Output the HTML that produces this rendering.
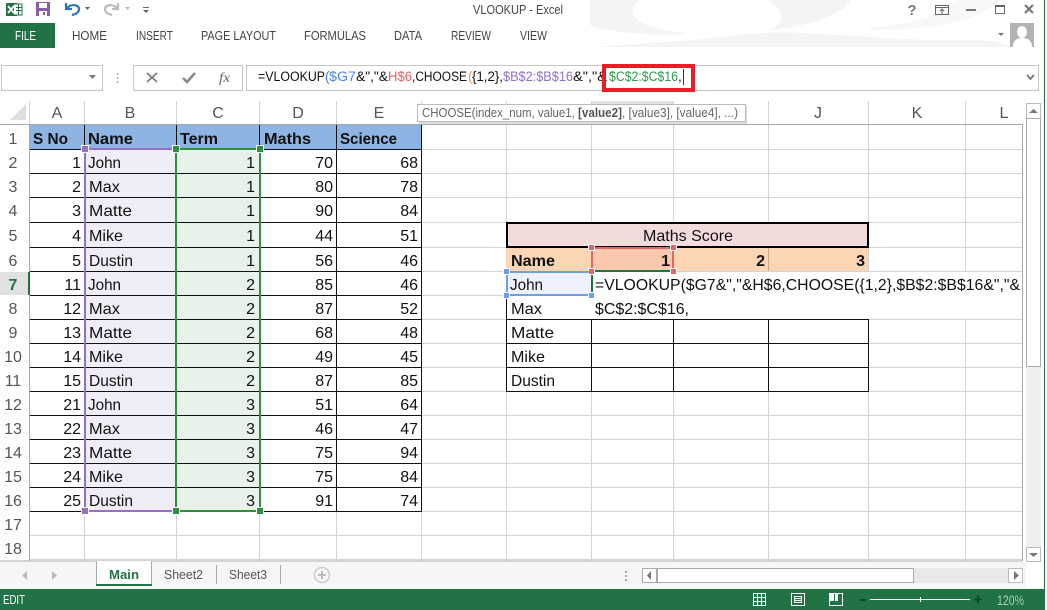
<!DOCTYPE html>
<html><head><meta charset="utf-8"><title>VLOOKUP - Excel</title>
<style>
html,body{margin:0;padding:0;background:#fff;overflow:hidden;width:1047px;height:610px}
svg{display:block;position:absolute;left:0;top:0}
text{font-family:"Liberation Sans",sans-serif;white-space:pre}
.c{font-size:16px;fill:#111}
.b{font-size:16px;font-weight:bold;fill:#111}
.r{font-size:16px;fill:#111;text-anchor:end}
.rb{font-size:16px;font-weight:bold;fill:#111;text-anchor:end}
.h{font-size:16px;fill:#555;text-anchor:middle}
.t{font-size:12.5px;fill:#444}
.f{font-size:13.5px;fill:#111}
.tip{font-size:12.5px;fill:#666}
</style></head><body>
<svg width="1047" height="610" viewBox="0 0 1047 610" xmlns="http://www.w3.org/2000/svg">
<rect width="1047" height="610" fill="#fff"/>
<!-- watermark -->
<g fill="#f4f4f4">
<path d="M590 47C640 44 700 40 740 35C790 28 850 38 930 40C960 41 990 36 1010 47Z"/>
<path d="M590 0H640C620 15 640 30 690 33C650 38 600 30 590 25Z"/>
<path d="M768 0H850C845 15 800 28 770 30C790 20 780 8 768 0Z"/>
<path d="M870 28C900 24 930 22 960 0H1000C990 14 950 30 870 30Z" opacity=".7"/>
</g>
<!-- QAT -->
<rect x="6" y="3" width="11" height="13" fill="#217346"/>
<path d="M14 4H22V15H14" fill="#fff" stroke="#217346"/>
<path d="M16 7.500H22M16 10.500H22M18.500 4V15" stroke="#217346" fill="none"/>
<path d="M8 6L14 13M14 6L8 13" stroke="#fff" stroke-width="1.800"/>
<path d="M36 2H50V16H36Z" fill="#8a5fa8"/><rect x="39" y="3" width="8" height="5" fill="#fff"/><rect x="39" y="11" width="8" height="5" fill="#fff"/><rect x="43" y="12" width="2" height="3" fill="#8a5fa8"/>
<path d="M66 3V9H72" fill="none" stroke="#2e75b6" stroke-width="2.200"/><path d="M67 8C72 3 80 5 79 10C78 13 76 14 72 15" fill="none" stroke="#2e75b6" stroke-width="2.200"/>
<path d="M85 7H90L87.500 10Z" fill="#666"/>
<path d="M118 3V9H112" fill="none" stroke="#bbb" stroke-width="2.200"/><path d="M117 8C112 3 104 5 105 10C106 13 108 14 112 15" fill="none" stroke="#bbb" stroke-width="2.200"/>
<path d="M125 7H130L127.500 10Z" fill="#bbb"/>
<path d="M143 7.500H149" stroke="#666"/><path d="M143 10H149L146 13Z" fill="#666"/>
<!-- title -->
<text x="473" y="14" class="t" textLength="90" lengthAdjust="spacingAndGlyphs">VLOOKUP - Excel</text>
<text x="912" y="15" style="font-size:15px;font-weight:bold;fill:#777" text-anchor="middle">?</text>
<rect x="935.500" y="5.500" width="13" height="9" fill="none" stroke="#666"/><path d="M936 7.500H948" stroke="#666"/><path d="M942 14V9.500M940 11L942 9L944 11" stroke="#666" fill="none"/>
<rect x="966" y="9" width="10" height="2" fill="#777"/>
<rect x="995.500" y="5.500" width="9" height="8" fill="none" stroke="#666"/><rect x="995" y="5" width="10" height="2" fill="#666"/>
<path d="M1025 5L1033 13M1033 5L1025 13" stroke="#777" stroke-width="2.200"/>
<!-- ribbon tabs -->
<rect x="0" y="23" width="55" height="25" fill="#217346"/>
<text x="15" y="40" style="font-size:12.5px;fill:#fff" textLength="21" lengthAdjust="spacingAndGlyphs">FILE</text>
<text x="72" y="40" class="t" textLength="35" lengthAdjust="spacingAndGlyphs">HOME</text>
<text x="136" y="40" class="t" textLength="37" lengthAdjust="spacingAndGlyphs">INSERT</text>
<text x="201" y="40" class="t" textLength="75" lengthAdjust="spacingAndGlyphs">PAGE LAYOUT</text>
<text x="304" y="40" class="t" textLength="62" lengthAdjust="spacingAndGlyphs">FORMULAS</text>
<text x="394" y="40" class="t" textLength="28" lengthAdjust="spacingAndGlyphs">DATA</text>
<text x="451" y="40" class="t" textLength="40" lengthAdjust="spacingAndGlyphs">REVIEW</text>
<text x="520" y="40" class="t" textLength="27" lengthAdjust="spacingAndGlyphs">VIEW</text>
<path d="M998 33H1004L1001 36Z" fill="#777"/>
<rect x="1010" y="23" width="24" height="24" fill="#b2b2b2"/>
<ellipse cx="1022" cy="32" rx="5" ry="6" fill="#fff"/><path d="M1013 47C1013 40 1017 38 1022 38C1027 38 1032 40 1032 47Z" fill="#fff"/>
<rect x="1044" y="0" width="1" height="589" fill="#217346"/>
<!-- formula bar -->
<rect x="1.500" y="65.500" width="101" height="25" fill="#fff" stroke="#c6c6c6"/>
<path d="M89 75H96L92.500 79Z" fill="#777"/>
<path d="M117.500 73V75M117.500 77V79M117.500 81V83" stroke="#aaa" stroke-width="1.500"/>
<rect x="133.500" y="65.500" width="109" height="25" fill="#fff" stroke="#c6c6c6"/>
<path d="M147 73L157 82M157 73L147 82" stroke="#888" stroke-width="2"/>
<path d="M183 78L187 82L195 73" stroke="#888" stroke-width="2.500" fill="none"/>
<text x="219" y="82" style="font-family:'Liberation Serif',serif;font-style:italic;font-size:14px;fill:#666" textLength="11" lengthAdjust="spacingAndGlyphs">fx</text>
<rect x="246.500" y="65.500" width="792" height="25" fill="#fff" stroke="#c6c6c6"/>
<path d="M1027 75L1030.500 79L1034 75" stroke="#777" stroke-width="1.800" fill="none"/>
<text x="258" y="81" class="f" textLength="67" lengthAdjust="spacingAndGlyphs">=VLOOKUP</text>
<text x="325" y="81" class="f" style="fill:#3f7fd9">(</text>
<text x="329" y="81" class="f" style="fill:#4a86e8" textLength="27" lengthAdjust="spacingAndGlyphs">$G7</text>
<text x="356" y="81" class="f" textLength="32" lengthAdjust="spacingAndGlyphs">&amp;","&amp;</text>
<text x="388" y="81" class="f" style="fill:#e85f5f" textLength="24" lengthAdjust="spacingAndGlyphs">H$6</text>
<text x="412" y="81" class="f" textLength="55" lengthAdjust="spacingAndGlyphs">,CHOOSE</text>
<text x="468" y="81" class="f" style="fill:#e89050">(</text>
<text x="472" y="81" class="f" textLength="31" lengthAdjust="spacingAndGlyphs">{1,2},</text>
<text x="503" y="81" class="f" style="fill:#9370c8" textLength="70" lengthAdjust="spacingAndGlyphs">$B$2:$B$16</text>
<text x="573" y="81" class="f" textLength="34" lengthAdjust="spacingAndGlyphs">&amp;","&amp;</text>
<text x="609" y="81" class="f" style="fill:#2d9a48" textLength="69" lengthAdjust="spacingAndGlyphs">$C$2:$C$16</text>
<text x="678" y="81" class="f">,</text>
<rect x="683" y="69" width="1" height="16" fill="#333"/>
<rect x="604" y="66" width="89" height="24" fill="none" stroke="#ed1c24" stroke-width="4"/>
<!-- corner -->
<path d="M10 120L26 104V120Z" fill="#dedede"/>
<!-- selected headers -->
<rect x="591" y="101" width="82" height="23" fill="#e1e1e1"/>
<rect x="591" y="122" width="82" height="2" fill="#217346"/>
<rect x="0" y="272" width="29" height="23" fill="#e1e1e1"/>
<!-- column header separators -->
<path d="M29.500 101V124M84.500 101V124M176.500 101V124M259.500 101V124M336.500 101V124M421.500 101V124M506.500 101V124M591.500 101V124M673.500 101V124M768.500 101V124M868.500 101V124M965.500 101V124" stroke="#d4d4d4"/>
<text x="57" y="118" class="h">A</text><text x="130" y="118" class="h">B</text><text x="218" y="118" class="h">C</text><text x="298" y="118" class="h">D</text><text x="379" y="118" class="h">E</text><text x="818" y="118" class="h">J</text><text x="917" y="118" class="h">K</text><text x="1004" y="118" class="h">L</text>
<!-- fills -->
<rect x="30" y="125" width="392" height="24" fill="#8db4e2"/>
<rect x="85" y="149" width="91" height="362" fill="#f0edf8"/>
<rect x="177" y="149" width="82" height="362" fill="#e9f2e8"/>
<!-- grid -->
<path d="M422 149.500H1022M422 173.500H1022M422 197.500H1022M422 222.500H1022M422 247.500H1022M422 271.500H1022M422 295.500H1022M422 319.500H1022M422 343.500H1022M422 367.500H1022M422 391.500H1022M422 415.500H1022M422 439.500H1022M422 463.500H1022M422 487.500H1022M30 511.500H1022M30 535.500H1022M30 559.500H1022" stroke="#d4d4d4"/>
<path d="M84.500 511V561M176.500 511V561M259.500 511V561M336.500 511V561M421.500 511V561M506.500 125V561M591.500 125V561M673.500 125V561M768.500 125V561M868.500 125V561M965.500 125V561" stroke="#d4d4d4"/>
<!-- black table -->
<path d="M30 149.500H422M30 173.500H422M30 197.500H422M30 222.500H422M30 247.500H422M30 271.500H422M30 295.500H422M30 319.500H422M30 343.500H422M30 367.500H422M30 391.500H422M30 415.500H422M30 439.500H422M30 463.500H422M30 487.500H422M30 511.500H422" stroke="#111"/>
<path d="M84.500 125V511M176.500 125V511M259.500 125V511M336.500 125V511M421.500 125V511" stroke="#111"/>
<!-- sheet frame -->
<path d="M0 124.500H1022.500V561" stroke="#aaa" fill="none"/>
<path d="M29.500 124V561M0 561H1022" stroke="#aaa" stroke-width="1" fill="none"/>
<rect x="28" y="272" width="2" height="23" fill="#217346"/>
<!-- row labels -->
<g>
<text x="13" y="144" class="h">1</text><text x="13" y="168" class="h">2</text><text x="13" y="192" class="h">3</text><text x="13" y="216" class="h">4</text><text x="13" y="241" class="h">5</text><text x="13" y="266" class="h">6</text>
<text x="13" y="290" class="h" style="font-weight:bold;fill:#217346">7</text>
<text x="13" y="314" class="h">8</text><text x="13" y="338" class="h">9</text><text x="13" y="362" class="h">10</text><text x="13" y="386" class="h">11</text><text x="13" y="410" class="h">12</text><text x="13" y="434" class="h">13</text><text x="13" y="458" class="h">14</text><text x="13" y="482" class="h">15</text><text x="13" y="506" class="h">16</text><text x="13" y="530" class="h">17</text><text x="13" y="554" class="h">18</text>
</g>
<!-- table header -->
<text x="33" y="144" class="b" textLength="35" lengthAdjust="spacingAndGlyphs">S No</text>
<text x="88" y="144" class="b" textLength="45" lengthAdjust="spacingAndGlyphs">Name</text>
<text x="180" y="144" class="b" textLength="38" lengthAdjust="spacingAndGlyphs">Term</text>
<text x="264" y="144" class="b" textLength="47" lengthAdjust="spacingAndGlyphs">Maths</text>
<text x="340" y="144" class="b" textLength="57" lengthAdjust="spacingAndGlyphs">Science</text>
<!-- rows -->
<text x="81" y="168" class="r">1</text><text x="88" y="168" class="c" textLength="33" lengthAdjust="spacingAndGlyphs">John</text><text x="255" y="168" class="r">1</text><text x="333" y="168" class="r">70</text><text x="418" y="168" class="r">68</text>
<text x="81" y="192" class="r">2</text><text x="89" y="192" class="c" textLength="31" lengthAdjust="spacingAndGlyphs">Max</text><text x="255" y="192" class="r">1</text><text x="333" y="192" class="r">80</text><text x="418" y="192" class="r">78</text>
<text x="81" y="216" class="r">3</text><text x="89" y="216" class="c" textLength="43" lengthAdjust="spacingAndGlyphs">Matte</text><text x="255" y="216" class="r">1</text><text x="333" y="216" class="r">90</text><text x="418" y="216" class="r">84</text>
<text x="81" y="241" class="r">4</text><text x="89" y="241" class="c" textLength="34" lengthAdjust="spacingAndGlyphs">Mike</text><text x="255" y="241" class="r">1</text><text x="333" y="241" class="r">44</text><text x="418" y="241" class="r">51</text>
<text x="81" y="266" class="r">5</text><text x="89" y="266" class="c" textLength="44" lengthAdjust="spacingAndGlyphs">Dustin</text><text x="255" y="266" class="r">1</text><text x="333" y="266" class="r">56</text><text x="418" y="266" class="r">46</text>
<text x="81" y="290" class="r">11</text><text x="88" y="290" class="c" textLength="33" lengthAdjust="spacingAndGlyphs">John</text><text x="255" y="290" class="r">2</text><text x="333" y="290" class="r">85</text><text x="418" y="290" class="r">46</text>
<text x="81" y="314" class="r">12</text><text x="89" y="314" class="c" textLength="31" lengthAdjust="spacingAndGlyphs">Max</text><text x="255" y="314" class="r">2</text><text x="333" y="314" class="r">87</text><text x="418" y="314" class="r">52</text>
<text x="81" y="338" class="r">13</text><text x="89" y="338" class="c" textLength="43" lengthAdjust="spacingAndGlyphs">Matte</text><text x="255" y="338" class="r">2</text><text x="333" y="338" class="r">68</text><text x="418" y="338" class="r">48</text>
<text x="81" y="362" class="r">14</text><text x="89" y="362" class="c" textLength="34" lengthAdjust="spacingAndGlyphs">Mike</text><text x="255" y="362" class="r">2</text><text x="333" y="362" class="r">49</text><text x="418" y="362" class="r">45</text>
<text x="81" y="386" class="r">15</text><text x="89" y="386" class="c" textLength="44" lengthAdjust="spacingAndGlyphs">Dustin</text><text x="255" y="386" class="r">2</text><text x="333" y="386" class="r">87</text><text x="418" y="386" class="r">85</text>
<text x="81" y="410" class="r">21</text><text x="88" y="410" class="c" textLength="33" lengthAdjust="spacingAndGlyphs">John</text><text x="255" y="410" class="r">3</text><text x="333" y="410" class="r">51</text><text x="418" y="410" class="r">64</text>
<text x="81" y="434" class="r">22</text><text x="89" y="434" class="c" textLength="31" lengthAdjust="spacingAndGlyphs">Max</text><text x="255" y="434" class="r">3</text><text x="333" y="434" class="r">46</text><text x="418" y="434" class="r">47</text>
<text x="81" y="458" class="r">23</text><text x="89" y="458" class="c" textLength="43" lengthAdjust="spacingAndGlyphs">Matte</text><text x="255" y="458" class="r">3</text><text x="333" y="458" class="r">75</text><text x="418" y="458" class="r">94</text>
<text x="81" y="482" class="r">24</text><text x="89" y="482" class="c" textLength="34" lengthAdjust="spacingAndGlyphs">Mike</text><text x="255" y="482" class="r">3</text><text x="333" y="482" class="r">75</text><text x="418" y="482" class="r">84</text>
<text x="81" y="506" class="r">25</text><text x="89" y="506" class="c" textLength="44" lengthAdjust="spacingAndGlyphs">Dustin</text><text x="255" y="506" class="r">3</text><text x="333" y="506" class="r">91</text><text x="418" y="506" class="r">74</text>
<!-- range selections -->
<rect x="85" y="149" width="91" height="362" fill="none" stroke="#9670c6" stroke-width="2"/>
<rect x="176" y="149" width="84" height="362" fill="none" stroke="#2d9040" stroke-width="2"/>
<g stroke="#fff">
<rect x="81.500" y="145.500" width="7" height="7" fill="#9670c6"/><rect x="81.500" y="507.500" width="7" height="7" fill="#9670c6"/>
<rect x="172.500" y="145.500" width="7" height="7" fill="#2d9040"/><rect x="256.500" y="145.500" width="7" height="7" fill="#2d9040"/><rect x="172.500" y="507.500" width="7" height="7" fill="#2d9040"/><rect x="256.500" y="507.500" width="7" height="7" fill="#2d9040"/>
</g>
<!-- maths score table -->
<rect x="506" y="222" width="362" height="25" fill="#f2dcdb"/>
<rect x="506" y="247" width="362" height="24" fill="#fcd5b4"/>
<rect x="592" y="248" width="81" height="23" fill="#f8c9ad"/>
<rect x="507" y="223" width="361" height="24" fill="none" stroke="#000" stroke-width="2"/>
<path d="M768.500 248V271" stroke="#c8a88c"/>
<rect x="507" y="272" width="84" height="23" fill="#edf2fd"/>
<rect x="592" y="272" width="430" height="47" fill="#fff"/>
<path d="M506.500 295V391M591.500 319V391M673.500 319V391M768.500 319V391M868.500 319V391M506 319.500H868M506 343.500H868M506 367.500H868M506 391.500H869" stroke="#111"/>
<path d="M591.500 296V319" stroke="#fff"/>
<rect x="591" y="271" width="2" height="24" fill="#217346"/>
<text x="643" y="241" class="c" textLength="90" lengthAdjust="spacingAndGlyphs">Maths Score</text>
<text x="511" y="266" class="b" textLength="44" lengthAdjust="spacingAndGlyphs">Name</text>
<text x="670" y="266" class="rb">1</text><text x="765" y="266" class="rb">2</text><text x="865" y="266" class="rb">3</text>
<text x="510" y="290" class="c" textLength="33" lengthAdjust="spacingAndGlyphs">John</text>
<text x="511" y="314" class="c" textLength="31" lengthAdjust="spacingAndGlyphs">Max</text>
<text x="511" y="338" class="c" textLength="43" lengthAdjust="spacingAndGlyphs">Matte</text>
<text x="511" y="362" class="c" textLength="34" lengthAdjust="spacingAndGlyphs">Mike</text>
<text x="511" y="386" class="c" textLength="44" lengthAdjust="spacingAndGlyphs">Dustin</text>
<text x="595" y="290" class="c" textLength="425" lengthAdjust="spacingAndGlyphs">=VLOOKUP($G7&amp;","&amp;H$6,CHOOSE({1,2},$B$2:$B$16&amp;","&amp;</text>
<text x="595" y="314" class="c" textLength="94" lengthAdjust="spacingAndGlyphs">$C$2:$C$16,</text>
<!-- H6 reference -->
<path d="M592 271V248H673V271" fill="none" stroke="#e8636a" stroke-width="2"/>
<rect x="591" y="270" width="83" height="2" fill="#217346"/>
<g stroke="#fff"><rect x="588.500" y="244.500" width="6" height="6" fill="#e8636a"/><rect x="670.500" y="244.500" width="6" height="6" fill="#e8636a"/><rect x="670.500" y="268.500" width="6" height="6" fill="#e8636a"/><rect x="588.500" y="268.500" width="6" height="6" fill="#e8636a"/></g>
<!-- G7 reference -->
<path d="M507 295V272H590M507 295H590" fill="none" stroke="#6d9eeb" stroke-width="2"/>
<g stroke="#fff"><rect x="503.500" y="268.500" width="6" height="6" fill="#6d9eeb"/><rect x="503.500" y="292.500" width="6" height="6" fill="#6d9eeb"/><rect x="588.500" y="292.500" width="6" height="6" fill="#6d9eeb"/></g>
<!-- tooltip -->
<rect x="419" y="106" width="328" height="18" fill="#ddd"/>
<rect x="417.500" y="104.500" width="328" height="17" fill="#fff" stroke="#bbb"/>
<text x="422" y="117" class="tip" textLength="156" lengthAdjust="spacingAndGlyphs">CHOOSE(index_num, value1, </text>
<text x="578" y="117" class="tip" style="font-weight:bold;fill:#555" textLength="44" lengthAdjust="spacingAndGlyphs">[value2]</text>
<text x="622" y="117" class="tip" textLength="116" lengthAdjust="spacingAndGlyphs">, [value3], [value4], ...)</text>
<!-- vertical scrollbar -->
<rect x="1026" y="118" width="15" height="429" fill="#f0f0f0"/>
<rect x="1026.500" y="103.500" width="14" height="15" fill="#fff" stroke="#bbb"/>
<path d="M1029 113H1038L1033.500 109Z" fill="#777"/>
<rect x="1026.500" y="118.500" width="14" height="248" fill="#fff" stroke="#aaa"/>
<rect x="1026.500" y="547.500" width="14" height="14" fill="#fff" stroke="#bbb"/>
<path d="M1029 553H1038L1033.500 557Z" fill="#777"/>
<!-- tab bar -->
<rect x="0" y="562" width="1044" height="27" fill="#f6f6f6"/>
<rect x="1026" y="562" width="18" height="27" fill="#fff"/>
<path d="M27 571V580L22 575.500Z" fill="#bbb"/><path d="M52 571V580L57 575.500Z" fill="#bbb"/>
<rect x="96" y="561" width="56" height="25" fill="#fff"/>
<path d="M96.500 561V585M151.500 561V585" stroke="#aaa"/>
<rect x="96" y="584" width="56" height="2" fill="#217346"/>
<text x="109" y="579" style="font-size:13px;font-weight:bold;fill:#217346" textLength="30" lengthAdjust="spacingAndGlyphs">Main</text>
<text x="164" y="579" style="font-size:13px;fill:#555" textLength="39" lengthAdjust="spacingAndGlyphs">Sheet2</text>
<text x="229" y="579" style="font-size:13px;fill:#555" textLength="38" lengthAdjust="spacingAndGlyphs">Sheet3</text>
<path d="M216.500 565V584M280.500 565V584" stroke="#aaa"/>
<circle cx="322" cy="575" r="7.500" fill="none" stroke="#ccc" stroke-width="1.500"/><path d="M318 575H326M322 571V579" stroke="#bbb" stroke-width="2"/>
<path d="M626 571V573M626 575V577M626 579V581" stroke="#aaa" stroke-width="2"/>
<!-- horizontal scrollbar -->
<rect x="657" y="568" width="365" height="15" fill="#e9e9e9"/>
<rect x="642.500" y="568.500" width="14" height="14" fill="#fff" stroke="#aaa"/>
<path d="M651 571V580L647 575.500Z" fill="#777"/>
<rect x="657.500" y="568.500" width="256" height="14" fill="#fff" stroke="#aaa"/>
<rect x="1008.500" y="568.500" width="14" height="14" fill="#fff" stroke="#bbb"/>
<path d="M1014 571V580L1019 575.500Z" fill="#777"/>
<!-- status bar -->
<rect x="0" y="589" width="1045" height="21" fill="#217346"/>
<text x="3" y="604" style="font-size:13px;fill:#fff" textLength="22" lengthAdjust="spacingAndGlyphs">EDIT</text>
<path d="M753.500 593.500H765.500V605.500H753.500ZM753.500 597.500H765.500M753.500 601.500H765.500M757.500 593.500V605.500M761.500 593.500V605.500" fill="none" stroke="#fff"/>
<rect x="791.500" y="593.500" width="13" height="12" fill="none" stroke="#fff"/><rect x="794.500" y="596.500" width="7" height="6" fill="none" stroke="#fff"/><path d="M795 598.500H801M795 600.500H801" stroke="#fff"/>
<rect x="829.500" y="593.500" width="13" height="12" fill="none" stroke="#fff"/><rect x="830" y="594" width="4" height="7" fill="#fff"/><rect x="835" y="594" width="3" height="7" fill="#fff"/>
<rect x="860" y="599" width="6" height="2" fill="#0c4a28"/>
<rect x="870" y="599" width="100" height="1" fill="#fff"/><rect x="920" y="597" width="1" height="5" fill="#fff"/>
<path d="M974 599.500H982M978 595.500V603.500" stroke="#0c4a28" stroke-width="2"/>
<text x="997" y="605" style="font-size:13.500px;fill:#a9cdb8" textLength="27" lengthAdjust="spacingAndGlyphs">120%</text>
</svg>
</body></html>
